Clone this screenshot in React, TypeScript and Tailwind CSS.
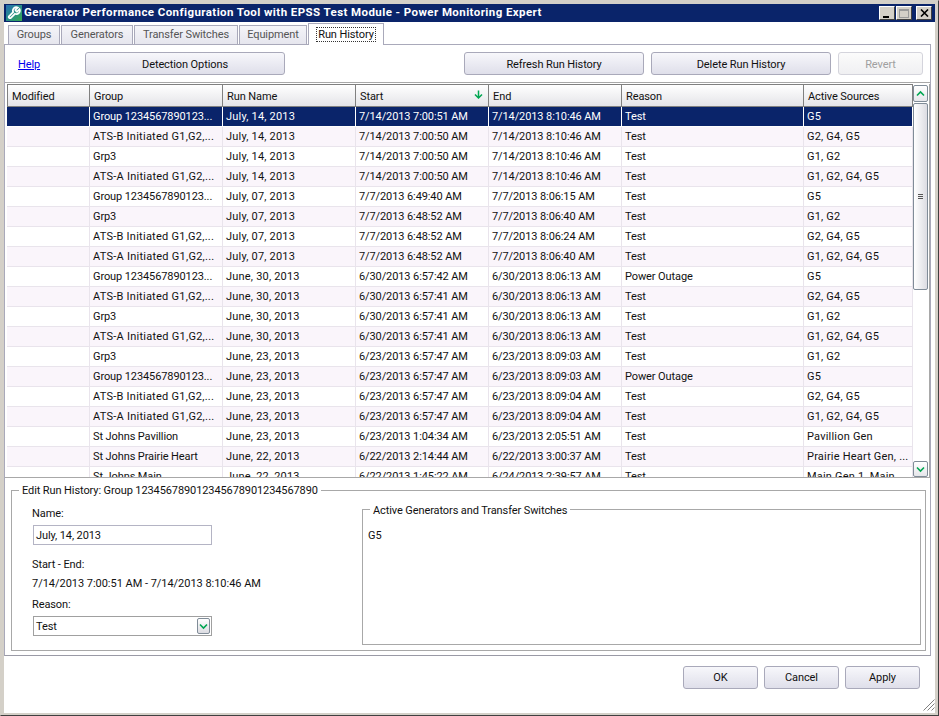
import React from "react";

const rows: string[][] = [
  ["Group 1234567890123...", "July, 14, 2013", "7/14/2013 7:00:51 AM", "7/14/2013 8:10:46 AM", "Test", "G5"],
  ["ATS-B Initiated G1,G2,...", "July, 14, 2013", "7/14/2013 7:00:50 AM", "7/14/2013 8:10:46 AM", "Test", "G2, G4, G5"],
  ["Grp3", "July, 14, 2013", "7/14/2013 7:00:50 AM", "7/14/2013 8:10:46 AM", "Test", "G1, G2"],
  ["ATS-A Initiated G1,G2,...", "July, 14, 2013", "7/14/2013 7:00:50 AM", "7/14/2013 8:10:46 AM", "Test", "G1, G2, G4, G5"],
  ["Group 1234567890123...", "July, 07, 2013", "7/7/2013 6:49:40 AM", "7/7/2013 8:06:15 AM", "Test", "G5"],
  ["Grp3", "July, 07, 2013", "7/7/2013 6:48:52 AM", "7/7/2013 8:06:40 AM", "Test", "G1, G2"],
  ["ATS-B Initiated G1,G2,...", "July, 07, 2013", "7/7/2013 6:48:52 AM", "7/7/2013 8:06:24 AM", "Test", "G2, G4, G5"],
  ["ATS-A Initiated G1,G2,...", "July, 07, 2013", "7/7/2013 6:48:52 AM", "7/7/2013 8:06:40 AM", "Test", "G1, G2, G4, G5"],
  ["Group 1234567890123...", "June, 30, 2013", "6/30/2013 6:57:42 AM", "6/30/2013 8:06:13 AM", "Power Outage", "G5"],
  ["ATS-B Initiated G1,G2,...", "June, 30, 2013", "6/30/2013 6:57:41 AM", "6/30/2013 8:06:13 AM", "Test", "G2, G4, G5"],
  ["Grp3", "June, 30, 2013", "6/30/2013 6:57:41 AM", "6/30/2013 8:06:13 AM", "Test", "G1, G2"],
  ["ATS-A Initiated G1,G2,...", "June, 30, 2013", "6/30/2013 6:57:41 AM", "6/30/2013 8:06:13 AM", "Test", "G1, G2, G4, G5"],
  ["Grp3", "June, 23, 2013", "6/23/2013 6:57:47 AM", "6/23/2013 8:09:03 AM", "Test", "G1, G2"],
  ["Group 1234567890123...", "June, 23, 2013", "6/23/2013 6:57:47 AM", "6/23/2013 8:09:03 AM", "Power Outage", "G5"],
  ["ATS-B Initiated G1,G2,...", "June, 23, 2013", "6/23/2013 6:57:47 AM", "6/23/2013 8:09:04 AM", "Test", "G2, G4, G5"],
  ["ATS-A Initiated G1,G2,...", "June, 23, 2013", "6/23/2013 6:57:47 AM", "6/23/2013 8:09:04 AM", "Test", "G1, G2, G4, G5"],
  ["St Johns Pavillion", "June, 23, 2013", "6/23/2013 1:04:34 AM", "6/23/2013 2:05:51 AM", "Test", "Pavillion Gen"],
  ["St Johns Prairie Heart", "June, 22, 2013", "6/22/2013 2:14:44 AM", "6/22/2013 3:00:37 AM", "Test", "Prairie Heart Gen, ..."],
  ["St Johns Main", "June, 22, 2013", "6/22/2013 1:45:22 AM", "6/24/2013 2:39:57 AM", "Test", "Main Gen 1, Main ..."],
];

const Cols = ["w-[133px]", "w-[133px]", "w-[133px]", "w-[133px]", "w-[182px]", "w-[109px]"];
const btn =
  "h-[23px] flex items-center justify-center rounded-[3px] border border-[#a9a9ba] bg-gradient-to-b from-[#f7f7fb] to-[#dfdfea] text-[#111]";
const btnOff =
  "h-[23px] flex items-center justify-center rounded-[3px] border border-[#d4d4dc] bg-gradient-to-b from-[#fbfbfb] to-[#f0f0f2] text-[#a0a0a0]";

function cellTracking(col: number, text: string) {
  if (col === 0 && text.startsWith("ATS")) return "tracking-[0.25px]";
  if (col === 1 || col === 5) return "tracking-[0.2px]";
  return "";
}

function Chevron({ up }: { up?: boolean }) {
  return (
    <svg width="9" height="7" viewBox="0 0 9 7" fill="none" stroke="#00a651" strokeWidth="1.6">
      <path d={up ? "M1 5.5 L4.5 2 L8 5.5" : "M1 1.5 L4.5 5 L8 1.5"} />
    </svg>
  );
}

function Caption({ kind }: { kind: "min" | "max" | "close" }) {
  return (
    <div className="w-4 h-[14px] bg-[#d4d0c8] border border-t-white border-l-white border-r-[#404040] border-b-[#404040] flex items-center justify-center">
      {kind === "min" && <div className="w-[6px] h-[2px] bg-black mt-[7px] mr-[2px]" />}
      {kind === "max" && <div className="w-[10px] h-[9px] border border-[#9a9a9a] border-t-2" />}
      {kind === "close" && (
        <svg width="9" height="8" viewBox="0 0 9 8" stroke="black" strokeWidth="1.6">
          <path d="M1 0.5 L8 7.5 M8 0.5 L1 7.5" />
        </svg>
      )}
    </div>
  );
}

function Tab({ label, w }: { label: string; w: string }) {
  return (
    <div className={`${w} h-[19px] mr-px border border-b-0 border-[#a9a9ba] bg-gradient-to-b from-[#f4f4f8] to-[#e6e6ee] flex items-center justify-center text-[#555]`}>
      {label}
    </div>
  );
}

export default function App() {
  return (
    <div className="w-[939px] h-[716px] bg-[#d4d0c8] overflow-hidden text-[11px] tracking-[-0.1px] text-[#111] font-['Roboto','Noto_Sans',sans-serif] border-r border-b border-r-[#404040] border-b-[#404040] border-l border-t border-l-[#d4d0c8] border-t-[#d4d0c8] flex flex-col pt-[3px] pl-[3px] pr-[3px] pb-[2px]">
      {/* Title bar */}
      <div className="h-[18px] w-[931px] shrink-0 bg-[#0a246a] flex items-center text-white font-bold text-[11.5px] pl-[2px] pr-[3px]">
        <div className="w-4 h-4 mr-[2px] bg-gradient-to-br from-[#2a6db0] to-[#38a84a] flex items-center justify-center">
          <svg width="14" height="14" viewBox="0 0 24 24" fill="none" stroke="white" strokeWidth="3">
            <path d="M14.7 6.3a1 1 0 0 0 0 1.4l1.6 1.6a1 1 0 0 0 1.4 0l3.8-3.8a6 6 0 0 1-7.9 7.9l-6.9 6.9a2.1 2.1 0 0 1-3-3l6.9-6.9a6 6 0 0 1 7.9-7.9z" />
          </svg>
        </div>
        <span className="flex-1 tracking-[0.42px]">Generator Performance Configuration Tool with EPSS Test Module - Power Monitoring Expert</span>
        <div className="flex gap-[1px]">
          <Caption kind="min" />
          <Caption kind="max" />
          <div className="w-[2px]" />
          <Caption kind="close" />
        </div>
      </div>

      {/* Client area */}
      <div className="w-[931px] h-[691px] bg-white flex flex-col">
        {/* Tabs */}
        <div className="h-[22px] pl-[4px] flex items-end relative">
          <Tab label="Groups" w="w-[52px]" />
          <Tab label="Generators" w="w-[72px]" />
          <Tab label="Transfer Switches" w="w-[104px]" />
          <Tab label="Equipment" w="w-[68px]" />
          <div className="w-[76px] h-[22px] -mb-px relative border border-b-0 border-[#a9a9ba] bg-white flex items-start pt-[3px] justify-center">
            <span className="border border-dotted border-[#333] px-px leading-[13px]">Run History</span>
          </div>
        </div>

        {/* Tab panel */}
        <div className="w-[927px] h-[612px] border border-[#a9a9ba] border-b-[#9a9aa6] flex flex-col">
          {/* Toolbar */}
          <div className="h-[37px] shrink-0 flex items-start pt-[7px]">
            <a className="w-[67px] ml-[13px] mt-[5px] text-[#0000ee] underline">Help</a>
            <div className={`${btn} w-[200px] pt-[3px]`}>Detection Options</div>
            <div className={`${btn} w-[180px] ml-[179px] pt-[3px]`}>Refresh Run History</div>
            <div className={`${btn} w-[180px] ml-[7px] pt-[3px]`}>Delete Run History</div>
            <div className={`${btnOff} w-[85px] ml-[7px] pt-[3px]`}>Revert</div>
          </div>

          {/* Grid */}
          <div className="h-[395px] shrink-0 border-t border-[#a8a8a8] pl-[2px] pt-px flex overflow-hidden">
            <div className="w-[906px] shrink-0 overflow-hidden">
              <div className="flex h-[23px] border-y border-[#808080]">
                <div className="w-[83px] pl-[4px] pt-[3px] flex items-center border-x border-[#808080] bg-gradient-to-b from-white to-[#e4e4e8]">Modified</div>
                {["Group", "Run Name", "Start", "End", "Reason", "Active Sources"].map((h, i) => (
                  <div key={h} className={`${Cols[i]} relative pl-[4px] pt-[3px] flex items-center border-r border-[#808080] bg-gradient-to-b from-white to-[#e4e4e8]`}>
                    {h}
                    {h === "Start" && (
                      <svg className="absolute right-[5px] top-[5px]" width="9" height="9" viewBox="0 0 9 9" fill="none" stroke="#00a651" strokeWidth="1.5">
                        <path d="M4.5 0.5 V8 M1 4.5 L4.5 8 L8 4.5" />
                      </svg>
                    )}
                  </div>
                ))}
              </div>
              {rows.map((r, i) => {
                const selected = i === 0;
                const rowBg = selected ? "bg-[#0a246a] text-white" : i % 2 ? "bg-[#faf5fb]" : "bg-white";
                const line = selected ? "border-white" : "border-[#e9e4ec]";
                return (
                  <div key={i} className={`flex h-[20px] border-b ${line} ${rowBg}`}>
                    <div className={`w-[83px] border-r ${line}`} />
                    {r.map((c, j) => (
                      <div key={j} className={`${Cols[j]} ${cellTracking(j, c)} pl-[3px] pt-px flex items-center whitespace-nowrap overflow-hidden border-r ${line}`}>
                        {c}
                      </div>
                    ))}
                  </div>
                );
              })}
            </div>

            {/* Scrollbar */}
            <div className="w-[15px] shrink-0 flex flex-col bg-white h-[393px]">
              <div className="h-[17px] mt-px border border-[#808c98] rounded-[2px] bg-gradient-to-b from-white to-[#e6e6ea] flex items-center justify-center">
                <Chevron up />
              </div>
              <div className="h-[187px] mt-px border border-[#808c98] rounded-[2px] bg-gradient-to-r from-white to-[#dcdce2] flex items-center justify-center">
                <div className="w-[5px] h-[5px] border-y-[1px] border-[#555] flex items-center">
                  <div className="w-full h-px bg-[#555]" />
                </div>
              </div>
              <div className="flex-1" />
              <div className="h-[16px] border border-[#808c98] rounded-[2px] bg-gradient-to-b from-white to-[#e6e6ea] flex items-center justify-center">
                <Chevron />
              </div>
            </div>
            <div className="w-px ml-px bg-[#a8a8a8]" />
          </div>

          {/* Edit area */}
          <div className="flex-1 border-t border-[#a8a8a8] px-[6px] pt-[12px]">
            <div className="relative h-[161px] w-[915px] border border-[#a8a8a8] flex">
              <span className="absolute left-[7px] -top-[8px] bg-white px-[3px] whitespace-nowrap">Edit Run History: Group 123456789012345678901234567890</span>
              <div className="w-[350px] pl-[20px] flex flex-col items-start">
                <div className="mt-[14px] h-[16px] pt-px">Name:</div>
                <div className="mt-[4px] ml-px w-[179px] h-[20px] border border-[#b4b4c4] pl-[2px] pt-[3px] flex items-center">July, 14, 2013</div>
                <div className="mt-[11px] h-[16px] pt-px">Start - End:</div>
                <div className="mt-[3px] h-[16px] pt-px tracking-[-0.03px]">7/14/2013 7:00:51 AM - 7/14/2013 8:10:46 AM</div>
                <div className="mt-[5px] h-[16px] pt-px">Reason:</div>
                <div className="mt-[4px] ml-px w-[179px] h-[20px] border border-[#a0a0a0] pl-[2px] flex items-center justify-between pr-px">
                  <span className="pt-[2px]">Test</span>
                  <div className="w-[13px] h-[16px] border border-[#808c98] rounded-[2px] bg-gradient-to-b from-white to-[#dcdce2] flex items-center justify-center">
                    <Chevron />
                  </div>
                </div>
              </div>
              <div className="relative mt-[18px] w-[559px] h-[136px] border border-[#a8a8a8] pl-[5px] pt-[18px]">
                <span className="absolute left-[7px] -top-[7px] bg-white px-[3px]">Active Generators and Transfer Switches</span>
                G5
              </div>
            </div>
          </div>
        </div>

        {/* Footer */}
        <div className="relative flex-1 flex justify-end gap-[6px] pt-[10px] pr-[15px]">
          <div className={`${btn} w-[75px] pt-px`}>OK</div>
          <div className={`${btn} w-[75px] pt-px`}>Cancel</div>
          <div className={`${btn} w-[75px] pt-px`}>Apply</div>
          <svg className="absolute right-0 bottom-[2px]" width="12" height="12" viewBox="0 0 12 12" stroke="#808080" strokeWidth="1">
            <path d="M0.5 11.5 L11.5 0.5 M4.5 11.5 L11.5 4.5 M8.5 11.5 L11.5 8.5" />
          </svg>
        </div>
      </div>
    </div>
  );
}
